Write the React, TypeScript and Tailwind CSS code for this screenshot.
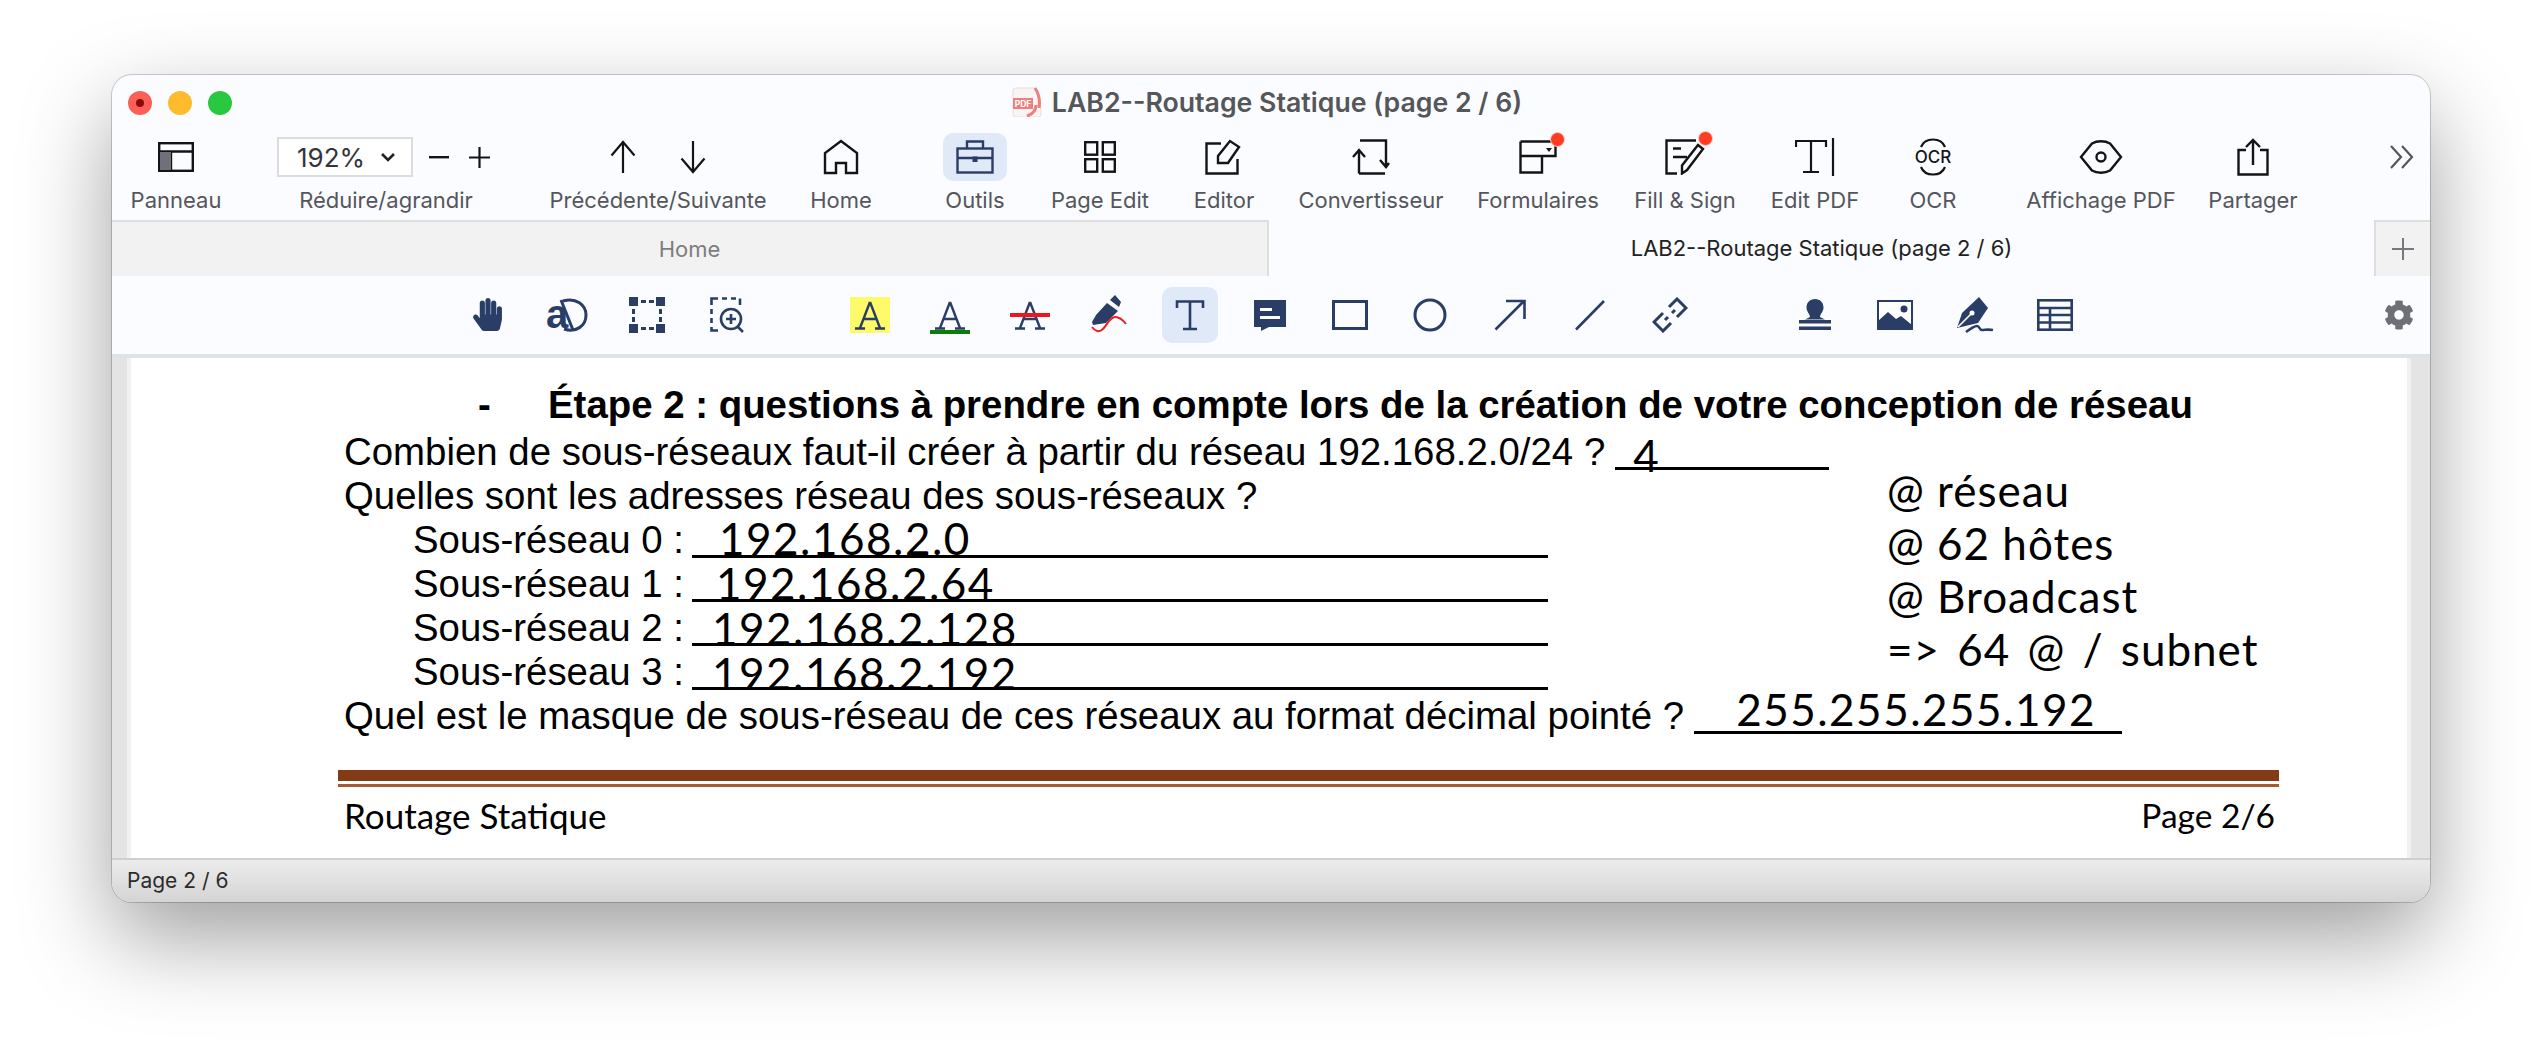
import { FaCog, FaHandPaper } from "react-icons/fa";

const NAVY = "#2a3d66";
const INK = "#141414";

function PanelIcon() {
  return (
    <svg width="36" height="30" viewBox="0 0 36 30" fill="none" stroke={INK} strokeWidth="2.4">
      <rect x="1.2" y="1.2" width="33.6" height="27.6" />
      <path d="M1 9.5h34M13 9.5V29" />
      <rect x="2" y="10" width="11" height="18" fill="#70707c" stroke="none" />
    </svg>
  );
}

function ArrowUp() {
  return (
    <svg width="26" height="34" viewBox="0 0 26 34" fill="none" stroke={INK} strokeWidth="2.2">
      <path d="M13 33V2M1.5 15.5 13 2l11.5 13.5" />
    </svg>
  );
}

function ArrowDown() {
  return (
    <svg width="26" height="34" viewBox="0 0 26 34" fill="none" stroke={INK} strokeWidth="2.2">
      <path d="M13 1v31M1.5 18.5 13 32l11.5-13.5" />
    </svg>
  );
}

function HomeIcon() {
  return (
    <svg width="36" height="36" viewBox="0 0 36 36" fill="none" stroke={INK} strokeWidth="2.4">
      <path d="M2 34V14L18 2l16 12v20H23V24H13v10Z" />
    </svg>
  );
}

function BriefcaseIcon() {
  return (
    <svg width="38" height="34" viewBox="0 0 38 34" fill="none" stroke={NAVY} strokeWidth="2.4">
      <rect x="1.5" y="8.5" width="35" height="24" />
      <path d="M11 8V1.5h16V8M1.5 18h35" />
      <rect x="16.5" y="16.5" width="5" height="5.5" fill={NAVY} stroke="none" />
    </svg>
  );
}

function GridIcon() {
  return (
    <svg width="32" height="32" viewBox="0 0 32 32" fill="none" stroke={INK} strokeWidth="2.4">
      <rect x="1.2" y="1.2" width="12" height="12.5" />
      <rect x="18.8" y="1.2" width="12" height="12.5" />
      <rect x="1.2" y="18.2" width="12" height="12.5" />
      <rect x="18.8" y="18.2" width="12" height="12.5" />
    </svg>
  );
}

function EditorIcon() {
  return (
    <svg width="38" height="36" viewBox="0 0 38 36" fill="none" stroke={INK} strokeWidth="2.4">
      <path d="M16 4.5H1.5v30h31V20" />
      <path d="M13 24v-7L25 2l9 6-11 16Z" />
    </svg>
  );
}

function ConvertIcon() {
  return (
    <svg width="38" height="36" viewBox="0 0 38 36" fill="none" stroke={INK} strokeWidth="2.4">
      <path d="M8 1.5h26V26M28 21l6 7 3-4M7 34.5h26M7 34.5V13M1 18l6-7 6 7" />
    </svg>
  );
}

function FormsIcon() {
  return (
    <svg width="38" height="34" viewBox="0 0 38 34" fill="none" stroke={INK} strokeWidth="2.4">
      <path d="M1.5 1.5h35V16H23M1.5 1.5v31H23V16H1.5" />
      <path d="M27 8h6l-3 4Z" fill={INK} stroke="none" />
    </svg>
  );
}

function FillSignIcon() {
  return (
    <svg width="40" height="36" viewBox="0 0 40 36" fill="none" stroke={INK} strokeWidth="2.4">
      <path d="M31 1.5H1.5v33H12" />
      <path d="M8 9.5h8M8 18h14" />
      <path d="M17 34.5v-8L33 6l5 4-16 21-5 3.5Z" />
    </svg>
  );
}

function EditPdfIcon() {
  return (
    <svg width="40" height="38" viewBox="0 0 40 38" fill="none" stroke={INK} strokeWidth="2.2">
      <path d="M1 9V3h30v6M16 3v31M8 34h16M38 0v38" />
    </svg>
  );
}

function OcrIcon() {
  return (
    <svg width="38" height="38" viewBox="0 0 38 38" fill="none" stroke={INK} strokeWidth="2.2">
      <path d="M7 9C11 -1 27 -1 31 9M7 29c4 10 20 10 24 0" />
      <text x="19" y="25" textAnchor="middle" fill={INK} stroke="none" fontSize="17" fontWeight="500" style={{ fontFamily: "Inter, sans-serif" }}>
        OCR
      </text>
    </svg>
  );
}

function EyeIcon() {
  return (
    <svg width="44" height="34" viewBox="0 0 44 34" fill="none" stroke={INK} strokeWidth="2.4">
      <path d="M2 17 13 3.5C18 .5 26 .5 31 3.5L42 17 31 30.5c-5 3-13 3-18 0Z" />
      <circle cx="22" cy="17" r="4.5" />
    </svg>
  );
}

function ShareIcon() {
  return (
    <svg width="32" height="38" viewBox="0 0 32 38" fill="none" stroke={INK} strokeWidth="2.4">
      <path d="M9 12H1.5v24.5h29V12H23M16 27V2M9 9l7-7 7 7" />
    </svg>
  );
}

function ChevronsIcon() {
  return (
    <svg width="26" height="24" viewBox="0 0 26 24" fill="none" stroke="#55555e" strokeWidth="2.2">
      <path d="M2 1l10 11L2 23M13 1l10 11-10 11" />
    </svg>
  );
}

function PdfIcon() {
  return (
    <svg width="30" height="30" viewBox="0 0 30 30">
      <path d="M1 4a3 3 0 0 1 3-3h19c4 7 6 15 6 26a3 3 0 0 1-3 3H4a3 3 0 0 1-3-3Z" fill="#fbf4f4" stroke="#e8dcdc" />
      <rect x="1" y="11" width="20" height="11" fill="#ec7f7f" />
      <text x="11" y="20" textAnchor="middle" fill="#fff" fontSize="8.5" fontWeight="700" style={{ fontFamily: "Inter, sans-serif" }}>
        PDF
      </text>
      <path d="M15 29c6-2 9-6 9-11M23 1c4 6 5 14 4 20" fill="none" stroke="#ec7f7f" strokeWidth="3" />
    </svg>
  );
}

function TextSelectIcon() {
  return (
    <svg className="overflow-visible" width="42" height="34" viewBox="0 0 42 34" fill="none" stroke={NAVY} strokeWidth="3">
      <path d="M17 3c13-4 23 4 23 14 0 11-10 18-22 14" />
      <path d="M15 2 27 32" />
      <text x="0" y="30" fill={NAVY} stroke="none" fontSize="40" fontWeight="700" style={{ fontFamily: "'Liberation Sans', sans-serif" }}>
        a
      </text>
    </svg>
  );
}

function SelectBoxIcon() {
  return (
    <svg width="36" height="36" viewBox="0 0 36 36" fill={NAVY}>
      <rect x="0" y="0" width="9" height="9" />
      <rect x="27" y="0" width="9" height="9" />
      <rect x="0" y="27" width="9" height="9" />
      <rect x="27" y="27" width="9" height="9" />
      <path d="M12 3h5v3h-5zM20 3h5v3h-5zM12 30h5v3h-5zM20 30h5v3h-5zM3 12h3v5H3zM3 20h3v5H3zM30 12h3v5h-3zM30 20h3v5h-3z" />
    </svg>
  );
}

function ZoomBoxIcon() {
  return (
    <svg width="34" height="36" viewBox="0 0 34 36" fill="none" stroke={NAVY} strokeWidth="2.6">
      <path d="M1.5 8V1.5H8M12 1.5h5M21 1.5h5M30 1.5V8M1.5 12v5M1.5 21v5M1.5 30v3.5H8" />
      <circle cx="21" cy="22" r="10" />
      <path d="M21 17v10M16 22h10M28 30l5 5" />
    </svg>
  );
}

// slab letter A used by the three text markup tools
function MarkupAIcon() {
  return (
    <svg width="32" height="30" viewBox="0 0 32 30" fill="none" stroke={NAVY} strokeWidth="2.4">
      <path d="M16 2 6 28M16 2l10 26M9.5 19h13M1 28.5h10M21 28.5h10" />
    </svg>
  );
}

function TextToolIcon() {
  return (
    <svg width="30" height="32" viewBox="0 0 30 32" fill="none" stroke={NAVY} strokeWidth="2.6">
      <path d="M2 9V2.5h26V9M15 2.5V30M8 30h14" />
    </svg>
  );
}

function PenScribbleIcon() {
  return (
    <svg width="38" height="40" viewBox="0 0 38 40" fill="none">
      <path d="M16 8 27 16 15 28 2 30 1 27 5 20Z" fill={NAVY} />
      <path d="M19 5 24 0 30 7 28 12Z" fill={NAVY} />
      <path d="M1 32c3 4 7 6 11 2s7-12 12-12 8 3 11 7" stroke="#ee1c25" strokeWidth="2" />
    </svg>
  );
}

function NoteIcon() {
  return (
    <svg width="34" height="32" viewBox="0 0 34 32">
      <path d="M1 1h32v27H16l-8 4v-4H1Z" fill={NAVY} />
      <path d="M7 9h12v3H7zM7 17h20v3H7z" fill="#fff" />
    </svg>
  );
}

function RectIcon() {
  return (
    <svg width="36" height="30" viewBox="0 0 36 30" fill="none" stroke={NAVY} strokeWidth="3">
      <rect x="1.5" y="1.5" width="33" height="27" />
    </svg>
  );
}

function CircleIcon() {
  return (
    <svg width="34" height="34" viewBox="0 0 34 34" fill="none" stroke={NAVY} strokeWidth="3">
      <circle cx="17" cy="17" r="15" />
    </svg>
  );
}

function DiagonalArrowIcon() {
  return (
    <svg width="32" height="32" viewBox="0 0 32 32" fill="none" stroke={NAVY} strokeWidth="2.6">
      <path d="M1.5 30.5 29 3M12 2h18.5v18" />
    </svg>
  );
}

function LineIcon() {
  return (
    <svg width="32" height="32" viewBox="0 0 32 32" fill="none" stroke={NAVY} strokeWidth="2.6">
      <path d="M2 30.5 30 2" />
    </svg>
  );
}

function LinkIcon() {
  return (
    <svg width="36" height="36" viewBox="0 0 36 36" fill="none" stroke={NAVY} strokeWidth="3">
      <path d="M17 10 25 2l9 9-9 9M19 26l-8 8-9-9 9-9M13 23l3-3M20 16l3-3" />
    </svg>
  );
}

function StampIcon() {
  return (
    <svg width="32" height="32" viewBox="0 0 32 32" fill={NAVY}>
      <path d="M16 0c5 0 8.500 3.500 8.500 8.500 0 4-3 6-3.500 9.500l5 2.500H6l5-2.500c-.5-3.500-3.500-5.500-3.500-9.500C7.500 3.500 11 0 16 0Z" />
      <rect x="0" y="21" width="32" height="3.500" />
      <rect x="0" y="27.500" width="32" height="3.500" />
    </svg>
  );
}

function ImageIcon() {
  return (
    <svg width="36" height="30" viewBox="0 0 36 30">
      <rect x="1" y="1" width="34" height="28" fill="#fff" stroke={NAVY} strokeWidth="2" />
      <circle cx="27" cy="9" r="3.5" fill={NAVY} />
      <path d="M1 29V21l10-9 8 7 5-3 11 9v5Z" fill={NAVY} />
    </svg>
  );
}

function PenSignIcon() {
  return (
    <svg width="38" height="36" viewBox="0 0 38 36" fill="none">
      <path d="M23 0 32 11 22 26 1 31 6 16Z" fill={NAVY} />
      <path d="M2 30 15 17" stroke="#fff" strokeWidth="1.600" />
      <circle cx="16" cy="16" r="2.500" fill="#fff" />
      <path d="M10 35c4-3 8-6 11-6s2 4 5 4 6-1 11 0" stroke={NAVY} strokeWidth="2.600" />
    </svg>
  );
}

function TableIcon() {
  return (
    <svg width="36" height="32" viewBox="0 0 36 32" fill="none" stroke={NAVY} strokeWidth="2.6">
      <rect x="1.3" y="1.3" width="33.4" height="29.4" />
      <path d="M1 9h34M1 16h34M1 23.5h34M13 9v22" />
    </svg>
  );
}

const toolbarItems = [
  { label: "Outils", width: "w-[154px]", icon: <div className="flex h-12 w-16 items-center justify-center rounded-[10px] bg-[#e0e9f8]"><BriefcaseIcon /></div> },
  { label: "Page Edit", width: "w-[96px]", icon: <GridIcon /> },
  { label: "Editor", width: "w-[152px]", icon: <EditorIcon /> },
  { label: "Convertisseur", width: "w-[142px]", icon: <ConvertIcon /> },
  { label: "Formulaires", width: "w-[192px]", icon: <FormsIcon />, dot: true },
  { label: "Fill & Sign", width: "w-[102px]", icon: <FillSignIcon />, dot: true },
];

function ToolbarItem({ label, width, children }: { label: string; width: string; children: React.ReactNode }) {
  return (
    <div className={`flex flex-col items-center ${width}`}>
      <div className="flex h-[54px] items-center justify-center">{children}</div>
      <div className="flex h-8 items-center whitespace-nowrap text-[22px] text-[#55565c]">{label}</div>
    </div>
  );
}

function ToolSlot({ children }: { children: React.ReactNode }) {
  return <div className="flex h-14 w-20 items-center justify-center">{children}</div>;
}

// leading sets how high the handwritten value sits above its rule
function Field({ width, pad, leading, children }: { width: string; pad: string; leading: string; children: React.ReactNode }) {
  return (
    <div className={`h-[36px] border-b-[3px] border-black font-['Lato',sans-serif] text-[44px] tracking-[1.5px] whitespace-nowrap ${width} ${pad} ${leading}`}>
      {children}
    </div>
  );
}

const subnets = [
  { name: "Sous-réseau 0 :", value: "192.168.2.0", pad: "pl-[27px]", leading: "leading-[32px]" },
  { name: "Sous-réseau 1 :", value: "192.168.2.64", pad: "pl-[24px]", leading: "leading-[34px]" },
  { name: "Sous-réseau 2 :", value: "192.168.2.128", pad: "pl-[20px]", leading: "leading-[36px]" },
  { name: "Sous-réseau 3 :", value: "192.168.2.192", pad: "pl-[20px]", leading: "leading-[38px]" },
];

export default function App() {
  return (
    <div className="h-[1050px] w-[2542px] overflow-hidden bg-white pl-[112px] pt-[75px]">
      <div className="flex h-[827px] w-[2318px] flex-col overflow-hidden rounded-[20px] bg-[#fbfcff] font-['Inter',sans-serif] shadow-[0_0_0_1px_rgba(0,0,0,0.18),0_36px_90px_rgba(0,0,0,0.38)]">
        {/* Title bar */}
        <div className="grid h-[55px] shrink-0 grid-cols-[1fr_auto_1fr] items-center pr-2">
          <div className="flex items-center gap-4 pl-4">
            <div className="flex h-6 w-6 items-center justify-center rounded-full bg-[#fc5f57]">
              <div className="h-2 w-2 rounded-full bg-[#8a0c08]" />
            </div>
            <div className="h-6 w-6 rounded-full bg-[#febb2e]" />
            <div className="h-6 w-6 rounded-full bg-[#2ac840]" />
          </div>
          <div className="flex items-center gap-[10px]">
            <PdfIcon />
            <span className="text-[26.7px] font-semibold text-[#55565a]">LAB2--Routage Statique (page 2 / 6)</span>
          </div>
          <div />
        </div>

        {/* Main toolbar */}
        <div className="flex h-[90px] shrink-0">
          <ToolbarItem label="Panneau" width="w-[128px]"><PanelIcon /></ToolbarItem>
          <div className="flex w-[292px] flex-col items-center">
            <div className="flex h-[54px] w-full items-center pl-[37px]">
              <div className="flex h-10 w-[136px] items-center justify-between border-2 border-[#dcdcdc] bg-white pl-[18px] pr-4 text-[26px] text-[#33343a]">
                192%
                <svg width="14" height="9" viewBox="0 0 14 9" fill="none" stroke="#222" strokeWidth="2.6"><path d="M1 1l6 6 6-6" /></svg>
              </div>
              <svg className="ml-4" width="20" height="3" viewBox="0 0 20 3"><rect width="20" height="2.4" fill={INK} /></svg>
              <svg className="ml-[20px]" width="21" height="21" viewBox="0 0 21 21" stroke={INK} strokeWidth="2.2"><path d="M0 10.5h21M10.5 0v21" /></svg>
            </div>
            <div className="flex h-8 items-center text-[22px] text-[#55565c]">Réduire/agrandir</div>
          </div>
          <ToolbarItem label="Précédente/Suivante" width="w-[252px]">
            <div className="flex gap-11"><ArrowUp /><ArrowDown /></div>
          </ToolbarItem>
          <ToolbarItem label="Home" width="w-[114px]"><HomeIcon /></ToolbarItem>
          {toolbarItems.map((item) => (
            <ToolbarItem key={item.label} label={item.label} width={item.width}>
              <div className="relative">
                {item.icon}
                {item.dot && (
                  <div className="absolute -right-2 -top-2 h-[15px] w-[15px] rounded-full border border-[#ffd0cc] bg-[#ff3b24]" />
                )}
              </div>
            </ToolbarItem>
          ))}
          <ToolbarItem label="Edit PDF" width="w-[158px]"><EditPdfIcon /></ToolbarItem>
          <ToolbarItem label="OCR" width="w-[78px]"><OcrIcon /></ToolbarItem>
          <ToolbarItem label="Affichage PDF" width="w-[258px]"><EyeIcon /></ToolbarItem>
          <ToolbarItem label="Partager" width="w-[46px]"><ShareIcon /></ToolbarItem>
          <div className="ml-auto flex h-[54px] items-center pr-[15px]"><ChevronsIcon /></div>
        </div>

        {/* Tabs */}
        <div className="flex h-[56px] shrink-0 text-[22px]">
          <div className="flex w-[1157px] items-center justify-center border-r-2 border-t-2 border-[#dedede] bg-[#f2f2f2] text-[#7d7d7d]">Home</div>
          <div className="flex flex-1 items-center justify-center text-[#222]">LAB2--Routage Statique (page 2 / 6)</div>
          <div className="flex w-14 items-center justify-center border-l-2 border-t-2 border-[#dedede] bg-[#f2f2f2]">
            <svg width="22" height="22" viewBox="0 0 22 22" stroke="#77777d" strokeWidth="2"><path d="M0 11h22M11 0v22" /></svg>
          </div>
        </div>

        {/* Annotation tools */}
        <div className="flex h-[78px] shrink-0 items-center pb-[1px] pl-[335px]">
          <ToolSlot><FaHandPaper size={33} color={NAVY} /></ToolSlot>
          <ToolSlot><TextSelectIcon /></ToolSlot>
          <ToolSlot><SelectBoxIcon /></ToolSlot>
          <ToolSlot><ZoomBoxIcon /></ToolSlot>
          <div className="w-[63px]" />
          <ToolSlot>
            <div className="flex h-9 w-10 items-center justify-center bg-[#fdfb6a]"><MarkupAIcon /></div>
          </ToolSlot>
          <ToolSlot>
            <div className="flex h-[38px] w-10 items-end justify-center border-b-4 border-[#0a7d0a]"><MarkupAIcon /></div>
          </ToolSlot>
          <ToolSlot>
            <div className="relative flex h-9 w-10 items-center justify-center">
              <MarkupAIcon />
              <div className="absolute left-0 right-0 top-4 h-1 bg-[#f0141e]" />
            </div>
          </ToolSlot>
          <ToolSlot><PenScribbleIcon /></ToolSlot>
          <ToolSlot>
            <div className="flex h-14 w-14 items-center justify-center rounded-[10px] bg-[#e0e9f8]"><TextToolIcon /></div>
          </ToolSlot>
          <ToolSlot><NoteIcon /></ToolSlot>
          <ToolSlot><RectIcon /></ToolSlot>
          <ToolSlot><CircleIcon /></ToolSlot>
          <ToolSlot><DiagonalArrowIcon /></ToolSlot>
          <ToolSlot><LineIcon /></ToolSlot>
          <ToolSlot><LinkIcon /></ToolSlot>
          <div className="w-[65px]" />
          <ToolSlot><StampIcon /></ToolSlot>
          <ToolSlot><ImageIcon /></ToolSlot>
          <ToolSlot><PenSignIcon /></ToolSlot>
          <ToolSlot><TableIcon /></ToolSlot>
          <div className="ml-auto pr-4"><FaCog size={30} color="#6f6f78" /></div>
        </div>

        {/* Document view */}
        <div className="flex min-h-0 flex-1 border-t-4 border-[#dfe3e8] bg-[#e4e4e4] pl-[15px] pr-[19px]">
          <div className="min-w-0 flex-1 border-x-4 border-[#f1f1f1] bg-white pl-[213px] pt-[28px] font-['Liberation_Sans',sans-serif] text-[38.4px] text-black">
            <div className="flex h-[44px] items-center pb-[6px] pl-[134px] font-bold">
              <span className="w-[70px]">-</span>
              <span className="whitespace-nowrap">Étape 2 : questions à prendre en compte lors de la création de votre conception de réseau</span>
            </div>
            <div className="flex h-[44px] items-center gap-[10px] whitespace-nowrap">
              <span>Combien de sous-réseaux faut-il créer à partir du réseau 192.168.2.0/24 ?</span>
              <Field width="w-[214px]" pad="pl-[18px]" leading="leading-[42px]">4</Field>
            </div>
            <div className="flex">
              <div className="w-[1543px]">
                <div className="flex h-[44px] items-center whitespace-nowrap">Quelles sont les adresses réseau des sous-réseaux ?</div>
                {subnets.map((s) => (
                  <div key={s.name} className="flex h-[44px] items-center gap-[10px] whitespace-nowrap pl-[69px]">
                    <span className="w-[269px]">{s.name}</span>
                    <Field width="w-[856px]" pad={s.pad} leading={s.leading}>{s.value}</Field>
                  </div>
                ))}
              </div>
              <div className="-mt-[10px] font-['Lato',sans-serif] text-[44px] leading-[53px] tracking-[1px] whitespace-nowrap">
                <div>@ réseau</div>
                <div>@ 62 hôtes</div>
                <div>@ Broadcast</div>
                <div className="[word-spacing:5px]">=&gt; 64 @ / subnet</div>
              </div>
            </div>
            <div className="flex h-[44px] items-center gap-[10px] whitespace-nowrap">
              <span>Quel est le masque de sous-réseau de ces réseaux au format décimal pointé ?</span>
              <Field width="w-[428px]" pad="pl-[42px]" leading="leading-[22px]">255.255.255.192</Field>
            </div>
            <div className="mt-[32px] h-[11px] w-[1941px] -translate-x-[6px] bg-[#823b14]" />
            <div className="mt-[3px] h-[3px] w-[1941px] -translate-x-[6px] bg-[#a65a30]" />
            <div className="mt-[2px] flex w-[1931px] items-center justify-between whitespace-nowrap font-['Lato',sans-serif] text-[35px]">
              <span>Routage Statique</span>
              <span className="text-[33.5px]">Page 2/6</span>
            </div>
          </div>
        </div>

        {/* Status bar */}
        <div className="flex h-[44px] shrink-0 items-center border-t-2 border-[#cfcfcf] bg-gradient-to-b from-[#ececec] to-[#d4d4d4] pl-[15px] text-[21px] text-[#2c2c2c]">
          Page 2 / 6
        </div>
      </div>
    </div>
  );
}
